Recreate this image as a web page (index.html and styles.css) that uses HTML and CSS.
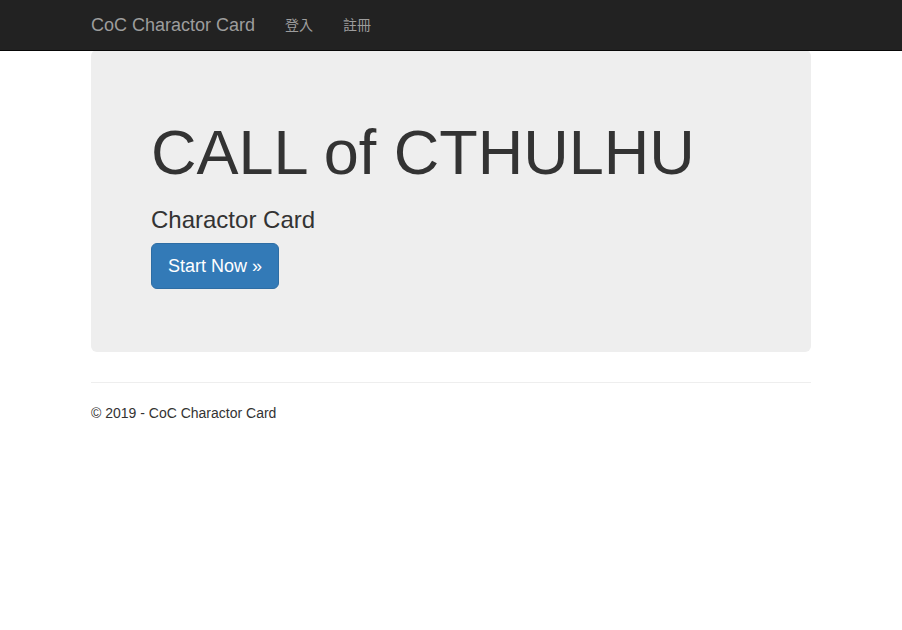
FILE: index.html
```html
<!DOCTYPE html>
<html lang="zh-Hant">
<head>
<meta charset="utf-8">
<title>CoC Charactor Card</title>
<link rel="stylesheet" href="styles.css">
</head>
<body>
<nav class="navbar">
  <div class="container nav-inner">
    <a class="brand" href="#">CoC Charactor Card</a>
    <ul class="nav-links">
      <li><a href="#">登入</a></li>
      <li><a href="#">註冊</a></li>
    </ul>
  </div>
</nav>
<div class="container body-content">
  <div class="jumbotron">
    <h1>CALL of CTHULHU</h1>
    <h3>Charactor Card</h3>
    <p class="actions"><a class="btn" href="#">Start Now &raquo;</a></p>
  </div>
  <hr>
  <footer>
    <p>&copy; 2019 - CoC Charactor Card</p>
  </footer>
</div>
</body>
</html>
```
FILE: styles.css
```css
* { box-sizing: border-box; }
html, body { margin: 0; padding: 0; }
body {
  font-family: "Liberation Sans", Arial, "Noto Sans CJK TC", sans-serif;
  font-size: 14px;
  line-height: 1.42857143;
  color: #333;
  background: #fff;
}
a { text-decoration: none; }
.container {
  width: 750px;
  margin: 0 auto;
  padding: 0 15px;
}
.navbar {
  height: 51px;
  background: #222;
  border-bottom: 1px solid #080808;
  margin-bottom: -1px;
  position: relative;
  z-index: 1;
}
.nav-inner {
  display: flex;
  align-items: stretch;
  height: 50px;
}
.brand {
  color: #9d9d9d;
  font-size: 18px;
  line-height: 20px;
  padding: 15px 15px 15px 0;
  height: 50px;
}
.nav-links {
  list-style: none;
  margin: 0;
  padding: 0;
  display: flex;
}
.nav-links a {
  display: block;
  color: #9d9d9d;
  padding: 15px;
  line-height: 20px;
  font-size: 14px;
  font-family: "Liberation Sans", "Noto Sans CJK TC", sans-serif;
}
.jumbotron {
  background: #eee;
  border-radius: 6px;
  padding: 48px 60px;
  margin-bottom: 30px;
}
.jumbotron h1 {
  font-size: 63px;
  font-weight: 500;
  line-height: 1.1;
  margin: 20px 0 10px;
  color: #333;
}
.jumbotron h3 {
  font-size: 24px;
  font-weight: 500;
  line-height: 1.1;
  margin: 20px 0 9px;
  color: #333;
}
.jumbotron p.actions {
  margin: 0 0 15px;
  font-size: 21px;
  font-weight: 200;
  line-height: 30px;
}
.btn {
  display: inline-block;
  padding: 10px 16px;
  font-size: 18px;
  line-height: 1.3333333;
  border-radius: 6px;
  color: #fff;
  background: #337ab7;
  border: 1px solid #2e6da4;
  vertical-align: middle;
}
hr {
  margin: 20px 0;
  border: 0;
  border-top: 1px solid #eee;
}
footer p {
  margin: 0 0 10px;
}
```
